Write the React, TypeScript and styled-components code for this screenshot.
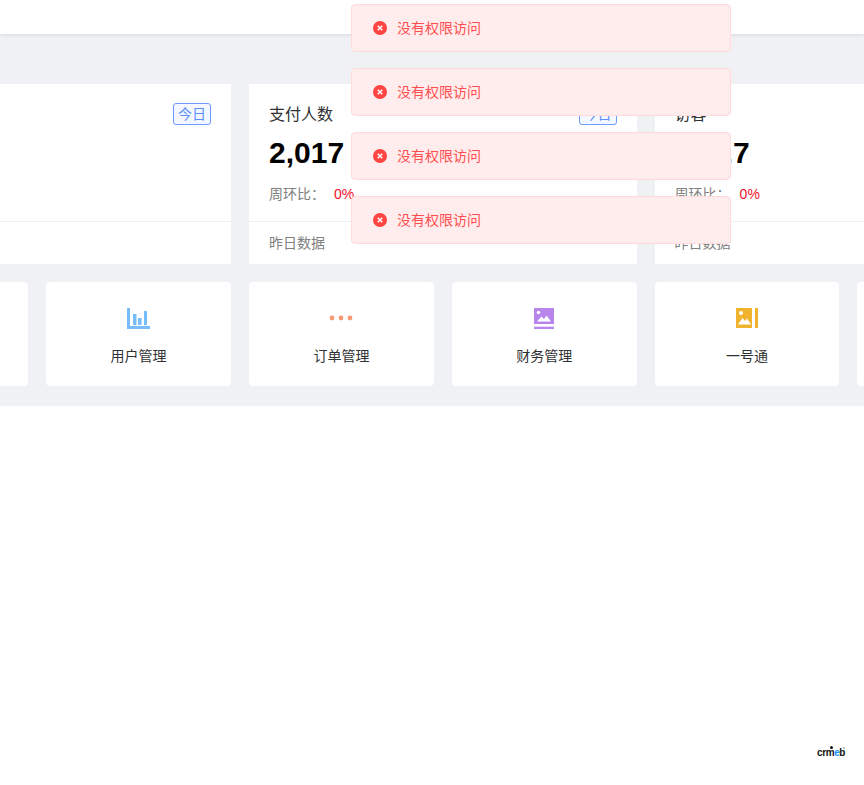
import React from 'react';
import styled, { createGlobalStyle } from 'styled-components';

const CJK = `"Noto Sans CJK SC", "Liberation Sans", sans-serif`;

const GlobalStyle = createGlobalStyle`
  html, body {
    margin: 0;
    height: 100%;
    background: #fff;
    overflow: hidden;
  }
  body {
    font-family: "Liberation Sans", "Noto Sans CJK SC", sans-serif;
  }
`;

const Page = styled.div`
  position: relative;
  width: 864px;
  height: 785px;
  overflow: hidden;
  background: #fff;
`;

const Header = styled.header`
  height: 34px;
  background: #fff;
  box-shadow: 0 1px 4px rgba(0, 21, 41, 0.1);
  position: relative;
`;

const Content = styled.main`
  height: 372px;
  box-sizing: border-box;
  padding: 50px 0 0 0;
  background: #f0f1f5;
  display: flex;
  flex-direction: column;
  gap: 18px;
`;

const StatRow = styled.div`
  display: grid;
  grid-template-columns: repeat(3, 387.6px);
  gap: 18px;
  margin-left: -156.6px;
`;

const StatCard = styled.section`
  height: 180px;
  background: #fff;
  display: flex;
  flex-direction: column;
`;

const StatBody = styled.div`
  height: 138px;
  box-sizing: border-box;
  padding: 19px 20px 0;
  border-bottom: 1px solid #eeeff2;
`;

const StatHead = styled.div`
  display: flex;
  justify-content: space-between;
  align-items: center;
  height: 22px;
`;

const StatTitle = styled.span`
  padding-bottom: 3px;
  font-family: ${CJK};
  font-size: 16px;
  color: #303133;
`;

const Tag = styled.span`
  box-sizing: border-box;
  width: 38px;
  height: 22px;
  padding-bottom: 2px;
  margin-left: auto;
  display: flex;
  align-items: center;
  justify-content: center;
  font-family: ${CJK};
  font-size: 14px;
  color: #5b8ff9;
  background: #f4f7ff;
  border: 1px solid #6d9bff;
  border-radius: 3px;
`;

const StatValue = styled.div`
  margin-top: 8px;
  font-family: "Liberation Sans", sans-serif;
  font-weight: 700;
  font-size: 30px;
  line-height: 40px;
  color: #000;
`;

const Compare = styled.div`
  margin-top: 10px;
  display: flex;
  align-items: center;
  height: 20px;
  font-size: 14px;
  font-family: ${CJK};
  color: #808080;
`;

const CompareLabel = styled.span`
  width: 65px;
`;

const Percent = styled.span`
  padding-top: 2px;
  font-family: "Liberation Sans", sans-serif;
  color: #f5102a;
`;

const StatFoot = styled.div`
  padding: 10px 20px 0;
  font-family: ${CJK};
  font-size: 14px;
  line-height: 20px;
  color: #808080;
`;

const QuickRow = styled.div`
  display: grid;
  grid-template-columns: repeat(6, 184.8px);
  gap: 18px;
  margin-left: -156.6px;
`;

const QuickCard = styled.a`
  height: 104px;
  box-sizing: border-box;
  padding-top: 24px;
  background: #fff;
  border-radius: 4px;
  display: flex;
  flex-direction: column;
  align-items: center;
`;

const QuickIcon = styled.div`
  height: 24px;
  display: flex;
  align-items: center;
  justify-content: center;
`;

const QuickLabel = styled.span`
  margin-top: 15px;
  font-family: ${CJK};
  font-size: 14px;
  line-height: 20px;
  color: #303133;
`;

const ToastStack = styled.div`
  position: absolute;
  top: 4px;
  left: 351px;
  width: 380px;
  display: flex;
  flex-direction: column;
  gap: 16px;
  z-index: 10;
`;

const Toast = styled.div`
  box-sizing: border-box;
  height: 48px;
  padding-left: 21px;
  display: flex;
  align-items: center;
  gap: 10px;
  background: #ffeded;
  border: 1px solid #ffdbdb;
  border-radius: 4px;
  font-family: ${CJK};
  font-size: 14px;
  color: #ff4d4f;
`;

const ToastText = styled.span`
  padding-bottom: 2px;
`;

const Logo = styled.div`
  position: absolute;
  left: 817px;
  top: 746px;
  display: flex;
  align-items: flex-end;
  font-family: "Liberation Sans", sans-serif;
  font-weight: 700;
  font-size: 10px;
  line-height: 14px;
  letter-spacing: -0.4px;
  color: #111;
`;

const LogoAccent = styled.span`
  color: #1890ff;
`;

const LogoHead = styled.i`
  position: absolute;
  left: 12.5px;
  top: 0;
  width: 3px;
  height: 3px;
  border-radius: 50%;
  background: #111;
`;

const LogoMark = styled.i`
  position: absolute;
  left: 26px;
  top: 1px;
  width: 2px;
  height: 2px;
  border-radius: 50%;
  background: #aaa;
`;

const ErrorIcon = () => (
  <svg width="14" height="14" viewBox="0 0 14 14">
    <circle cx="7" cy="7" r="7" fill="#ff4444" />
    <path d="M5.200 5.200l3.600 3.600M8.800 5.200l-3.600 3.600" stroke="#fff" strokeWidth="1.600" strokeLinecap="round" />
  </svg>
);

const ChartIcon = () => (
  <svg width="23" height="21" viewBox="0 0 23 21">
    <path d="M0 0h3v18h20v3h-23z" fill="#76bdff" />
    <path d="M6 6h3.500v11h-3.500zM11 10h3.500v7h-3.500zM17 3h3v14h-3z" fill="#76bdff" />
  </svg>
);

const DotsIcon = () => (
  <svg width="24" height="6" viewBox="0 0 24 6">
    <circle cx="3" cy="3" r="2.400" fill="#f59a74" />
    <circle cx="12" cy="3" r="2.400" fill="#f59a74" />
    <circle cx="21" cy="3" r="2.400" fill="#f59a74" />
  </svg>
);

const PictureIcon = () => (
  <svg width="20" height="21" viewBox="0 0 20 21">
    <path d="M0 0h20v16h-20z" fill="#b885ec" />
    <path d="M0 18.700h20v2.300h-20z" fill="#b885ec" />
    <circle cx="4.500" cy="4.500" r="1.800" fill="#fff" />
    <path d="M3 13.500l4.500-5 2.500 2.500 2.500-3.500 4.500 6z" fill="#fff" />
  </svg>
);

const AccountIcon = () => (
  <svg width="22" height="20" viewBox="0 0 22 20">
    <path d="M0 0h16v20h-16z" fill="#f0b32d" />
    <path d="M19 0h3v20h-3z" fill="#f0b32d" />
    <circle cx="5" cy="5" r="2" fill="#fff" />
    <path d="M2 16.500l4.500-6.500 2.500 3 2-2.500 4 6z" fill="#fff" />
  </svg>
);

const stats = [
  { id: 'sales', tag: true },
  { id: 'payers', title: '支付人数', value: '2,017', tag: true },
  { id: 'visitors', title: '访客', value: '207.7', tag: false },
];

const quickLinks = [
  { id: 'a' },
  { id: 'users', label: '用户管理', icon: <ChartIcon /> },
  { id: 'orders', label: '订单管理', icon: <DotsIcon /> },
  { id: 'finance', label: '财务管理', icon: <PictureIcon /> },
  { id: 'account', label: '一号通', icon: <AccountIcon /> },
  { id: 'b' },
];

const App = () => {
  return (
    <Page>
      <GlobalStyle />
      <Header />
      <Content>
        <StatRow>
          {stats.map(stat => (
            <StatCard key={stat.id}>
              <StatBody>
                <StatHead>
                  {stat.title && <StatTitle>{stat.title}</StatTitle>}
                  {stat.tag && <Tag>今日</Tag>}
                </StatHead>
                {stat.value && (
                  <>
                    <StatValue>{stat.value}</StatValue>
                    <Compare>
                      <CompareLabel>周环比：</CompareLabel>
                      <Percent>0%</Percent>
                    </Compare>
                  </>
                )}
              </StatBody>
              {stat.value && <StatFoot>昨日数据</StatFoot>}
            </StatCard>
          ))}
        </StatRow>
        <QuickRow>
          {quickLinks.map(link => (
            <QuickCard key={link.id}>
              <QuickIcon>{link.icon}</QuickIcon>
              {link.label && <QuickLabel>{link.label}</QuickLabel>}
            </QuickCard>
          ))}
        </QuickRow>
      </Content>
      <ToastStack>
        {[0, 1, 2, 3].map(i => (
          <Toast key={i}>
            <ErrorIcon />
            <ToastText>没有权限访问</ToastText>
          </Toast>
        ))}
      </ToastStack>
      <Logo>
        crm<LogoAccent>e</LogoAccent>b
        <LogoHead />
        <LogoMark />
      </Logo>
    </Page>
  );
};

export default App;
